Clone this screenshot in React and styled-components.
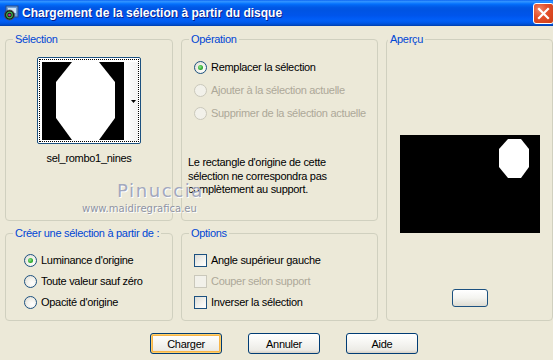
import React from "react";
import styled, { createGlobalStyle } from "styled-components";

const GlobalStyle = createGlobalStyle`
  html, body {
    margin: 0;
    padding: 0;
    background: #ece9d8;
    overflow: hidden;
  }
  body {
    font-family: "Liberation Sans", Arial, sans-serif;
    font-size: 11px;
    letter-spacing: -0.3px;
    color: #000;
  }
`;

const App = () => {
  return (
    <>
      <GlobalStyle />
      <Window>
        <TitleBar>
          <AppIcon />
          <Title>Chargement de la sélection à partir du disque</Title>
          <CloseButton>
            <svg width="13" height="13" viewBox="0 0 13 13">
              <path d="M2 2 L11 11 M11 2 L2 11" stroke="#fff" strokeWidth="2.2" strokeLinecap="square" />
            </svg>
          </CloseButton>
        </TitleBar>

        <Body>
          <Groups>
            <Group $height={188}>
              <Legend>Sélection</Legend>
              <ThumbColumn>
                <Thumb>
                  <Focus>
                    <ThumbImage>
                      <svg width="82" height="78" viewBox="0 0 82 78">
                        <rect width="82" height="78" fill="#000" />
                        <polygon points="30,0 57,0 73,20 73,56 57,78 30,78 14,56 14,20" fill="#fff" />
                      </svg>
                    </ThumbImage>
                    <DropStrip>
                      <svg width="5" height="3" viewBox="0 0 5 3">
                        <polygon points="0,0 5,0 2.5,3" fill="#000" />
                      </svg>
                    </DropStrip>
                  </Focus>
                </Thumb>
                <ThumbLabel>sel_rombo1_nines</ThumbLabel>
              </ThumbColumn>
            </Group>

            <Group $height={188}>
              <Legend>Opération</Legend>
              <OptionList $top={13} $left={12} $gap={7}>
                <Option>
                  <Radio $checked />
                  <span>Remplacer la sélection</span>
                </Option>
                <Option $disabled>
                  <Radio $disabled />
                  <span>Ajouter à la sélection actuelle</span>
                </Option>
                <Option $disabled>
                  <Radio $disabled />
                  <span>Supprimer de la sélection actuelle</span>
                </Option>
              </OptionList>
              <Note>
                Le rectangle d'origine de cette
                <br />
                sélection ne correspondra pas
                <br />
                complètement au support.
              </Note>
            </Group>

            <PreviewGroup>
              <Legend>Aperçu</Legend>
              <PreviewArea>
                <svg width="140" height="98" viewBox="0 0 140 98">
                  <rect width="140" height="98" fill="#000" />
                  <polygon points="108,4 121,4 129,14 129,32 121,43 108,43 99,32 99,14" fill="#fff" />
                </svg>
              </PreviewArea>
              <SmallButton />
            </PreviewGroup>

            <Group $height={94}>
              <Legend>Créer une sélection à partir de :</Legend>
              <OptionList $top={12} $left={18} $gap={5}>
                <Option>
                  <Radio $checked />
                  <span>Luminance d'origine</span>
                </Option>
                <Option>
                  <Radio />
                  <span>Toute valeur sauf zéro</span>
                </Option>
                <Option>
                  <Radio />
                  <span>Opacité d'origine</span>
                </Option>
              </OptionList>
            </Group>

            <Group $height={94}>
              <Legend>Options</Legend>
              <OptionList $top={12} $left={12} $gap={5}>
                <Option>
                  <Checkbox />
                  <span>Angle supérieur gauche</span>
                </Option>
                <Option $disabled>
                  <Checkbox $disabled />
                  <span>Couper selon support</span>
                </Option>
                <Option>
                  <Checkbox />
                  <span>Inverser la sélection</span>
                </Option>
              </OptionList>
            </Group>
          </Groups>

          <ButtonRow>
            <Button $default>Charger</Button>
            <Button>Annuler</Button>
            <Button>Aide</Button>
          </ButtonRow>

          <Watermark>
            <WatermarkName>Pinuccia</WatermarkName>
            <WatermarkUrl>www.maidiregrafica.eu</WatermarkUrl>
          </Watermark>
        </Body>
      </Window>
    </>
  );
};

const AppIcon = () => (
  <IconBox>
    <svg width="16" height="16" viewBox="0 0 16 16">
      <rect x="3" y="1" width="12" height="11" fill="#6fa0d8" stroke="#2a4f8a" strokeWidth="1" />
      <rect x="5" y="3" width="8" height="5" fill="#cfe4f7" />
      <circle cx="6.5" cy="10" r="5" fill="#1a1a1a" stroke="#555" strokeWidth="0.8" />
      <circle cx="6.5" cy="10" r="2.8" fill="none" stroke="#3cb44b" strokeWidth="1.2" />
      <circle cx="6.5" cy="10" r="1.3" fill="#c0309a" />
    </svg>
  </IconBox>
);

export default App;

const Window = styled.div`
  width: 553px;
  height: 360px;
  position: relative;
  background: #ece9d8;
`;

const TitleBar = styled.div`
  height: 26px;
  display: flex;
  align-items: center;
  padding: 0 0 0 3px;
  background: linear-gradient(
    to bottom,
    #0058ee 0%,
    #3593ff 4%,
    #288eff 8%,
    #127dff 12%,
    #036ffc 16%,
    #0262ee 22%,
    #0057e5 30%,
    #0054e3 40%,
    #0055eb 60%,
    #005bf5 70%,
    #0260f5 80%,
    #0058e8 88%,
    #004fd0 94%,
    #003dac 100%
  );
`;

const IconBox = styled.div`
  width: 16px;
  height: 16px;
  display: flex;
`;

const Title = styled.div`
  flex: 1;
  margin-left: 3px;
  color: #fff;
  font-family: "Liberation Sans", Arial, sans-serif;
  font-weight: bold;
  font-size: 12px;
  letter-spacing: 0;
  text-shadow: 1px 1px 0 #0a1e8a;
  white-space: nowrap;
`;

const CloseButton = styled.div`
  width: 19px;
  height: 19px;
  margin-right: -1px;
  border: 1px solid #fff;
  border-radius: 3px;
  display: flex;
  align-items: center;
  justify-content: center;
  background: radial-gradient(circle at 30% 30%, #f2876a 0%, #e4502b 40%, #cc3d14 100%);
  box-sizing: content-box;
`;

const Body = styled.div`
  padding: 7px 0 0 5px;
`;

const Groups = styled.div`
  display: grid;
  grid-template-columns: 168px 197px 167px;
  grid-template-rows: 188px 94px;
  column-gap: 8px;
  row-gap: 6px;
`;

const Group = styled.fieldset`
  margin: 0;
  padding: 0 0 0 6px;
  min-width: 0;
  box-sizing: border-box;
  height: ${(p) => p.$height}px;
  border: 1px solid #d0d0bf;
  border-radius: 4px;
  display: flex;
  flex-direction: column;
`;

const PreviewGroup = styled(Group)`
  grid-column: 3;
  grid-row: 1 / span 2;
  height: 288px;
  padding: 0;
  align-items: center;
`;

const Legend = styled.legend`
  margin-left: 1px;
  padding: 0 2px;
  color: #0046d5;
  font-size: 11px;
  line-height: 13px;
`;

const ThumbColumn = styled.div`
  display: flex;
  flex-direction: column;
  align-items: center;
  padding-top: 11px;
  margin-left: -6px;
`;

const Thumb = styled.div`
  width: 104px;
  height: 87px;
  box-sizing: border-box;
  border: 1px solid #1c5180;
  border-radius: 2px;
  padding: 1px;
  background: #fff;
`;

const Focus = styled.div`
  height: 100%;
  box-sizing: border-box;
  border: 1px dotted #000;
  display: flex;
  padding: 2px 0 0 2px;
`;

const ThumbImage = styled.div`
  width: 82px;
  height: 78px;
  display: flex;
`;

const DropStrip = styled.div`
  flex: 1;
  display: flex;
  align-items: center;
  justify-content: flex-end;
  padding-right: 2px;
  background: linear-gradient(to right, #fff, #f2f2f2);
`;

const ThumbLabel = styled.div`
  margin-top: 8px;
  line-height: 13px;
`;

const OptionList = styled.div`
  display: flex;
  flex-direction: column;
  gap: ${(p) => p.$gap}px;
  padding-top: ${(p) => p.$top}px;
  padding-left: ${(p) => p.$left - 6}px;
`;

const Option = styled.label`
  display: flex;
  align-items: center;
  gap: 4px;
  height: 16px;
  white-space: nowrap;
  color: ${(p) => (p.$disabled ? "#aca899" : "#000")};
`;

const Radio = styled.span`
  width: 13px;
  height: 13px;
  box-sizing: border-box;
  border-radius: 50%;
  border: 1px solid ${(p) => (p.$disabled ? "#cac8bb" : "#1c5180")};
  background: ${(p) =>
    p.$disabled
      ? "#f2f1ea"
      : "radial-gradient(circle at 65% 65%, #ffffff 0%, #f4f3ee 40%, #dcd9cf 100%)"};
  display: flex;
  align-items: center;
  justify-content: center;
  flex-shrink: 0;

  &::after {
    content: "";
    display: ${(p) => (p.$checked ? "block" : "none")};
    width: 5px;
    height: 5px;
    border-radius: 50%;
    background: radial-gradient(circle at 40% 40%, #8ee88e 0%, #2ea82e 60%, #1a8a1a 100%);
  }
`;

const Checkbox = styled.span`
  width: 13px;
  height: 13px;
  box-sizing: border-box;
  border: 1px solid ${(p) => (p.$disabled ? "#cac8bb" : "#1c5180")};
  background: ${(p) =>
    p.$disabled ? "#f2f1ea" : "linear-gradient(135deg, #dcdcd7 0%, #f4f4f0 60%, #ffffff 100%)"};
  flex-shrink: 0;
`;

const Note = styled.p`
  margin: 35px 0 0;
  line-height: 13.5px;
`;

const PreviewArea = styled.div`
  margin-top: 89px;
  width: 140px;
  height: 98px;
  display: flex;
`;

const SmallButton = styled.div`
  margin-top: 56px;
  width: 36px;
  height: 18px;
  box-sizing: border-box;
  border: 1px solid #1c5180;
  border-radius: 3px;
  background: linear-gradient(to bottom, #ffffff 0%, #f4f4f0 50%, #dedcd2 100%);
`;

const ButtonRow = styled.div`
  display: flex;
  gap: 26px;
  padding-left: 145px;
  margin-top: 12px;
`;

const Button = styled.div`
  width: 72px;
  height: 21px;
  box-sizing: border-box;
  border: 1px solid #003c74;
  border-radius: 3px;
  display: flex;
  align-items: center;
  justify-content: center;
  background: linear-gradient(to bottom, #ffffff 0%, #f7f7f4 40%, #ecebe6 85%, #d6d0c5 100%);
  box-shadow: ${(p) =>
    p.$default ? "inset 0 0 0 1px #ffcf6b, inset 0 0 0 2px #f7b548" : "none"};
  font-size: 11px;
`;

const Watermark = styled.div`
  position: absolute;
  left: 82px;
  top: 180px;
  display: flex;
  flex-direction: column;
  align-items: flex-start;
  pointer-events: none;
  letter-spacing: 0;
`;

const WatermarkName = styled.div`
  margin-left: 35px;
  font-family: "DejaVu Sans", sans-serif;
  font-size: 18px;
  letter-spacing: 1.6px;
  color: #a2a8be;
  text-shadow: 1px 1px 0 #ffffff;
  line-height: 21px;
`;

const WatermarkUrl = styled.div`
  margin-top: 2px;
  font-family: "DejaVu Sans", sans-serif;
  font-size: 10px;
  color: #8e93a3;
  text-shadow: 1px 1px 0 #ffffff;
  line-height: 12px;
`;
